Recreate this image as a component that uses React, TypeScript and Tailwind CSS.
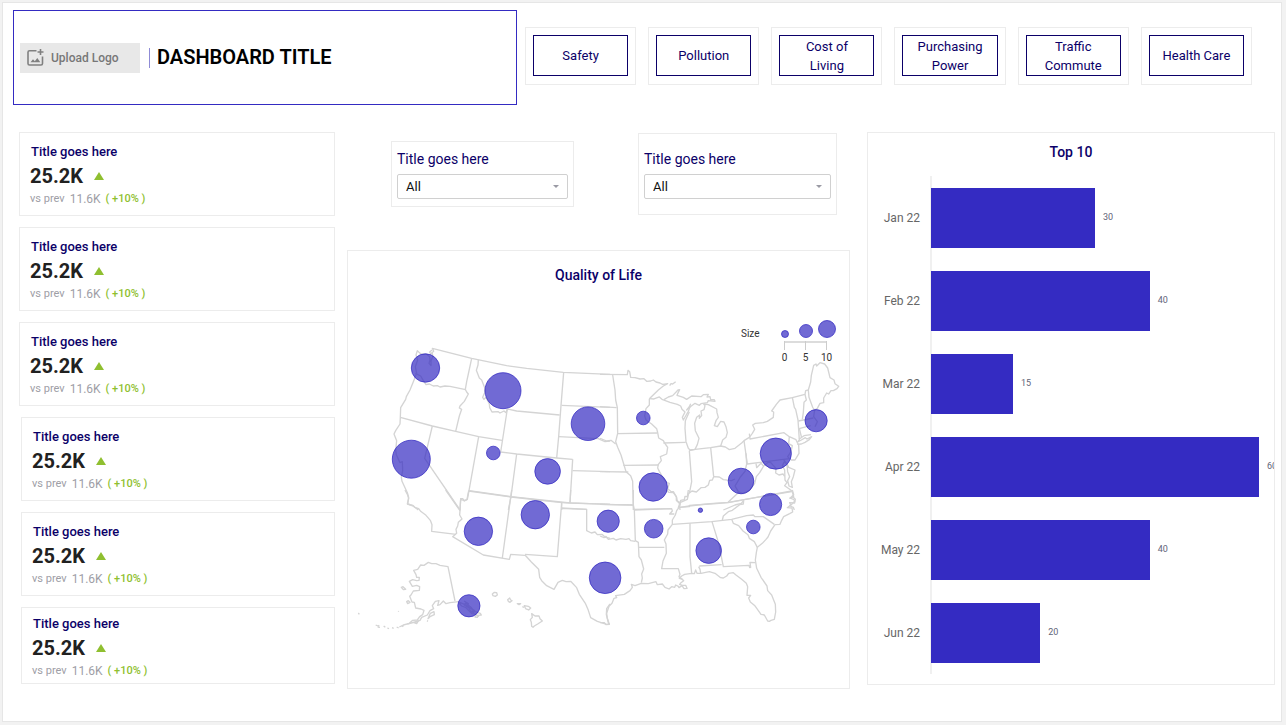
const categories = ['Safety', 'Pollution', 'Cost of Living', 'Purchasing Power', 'Traffic Commute', 'Health Care'];

const months = [
  { label: 'Jan 22', value: 30 },
  { label: 'Feb 22', value: 40 },
  { label: 'Mar 22', value: 15 },
  { label: 'Apr 22', value: 60 },
  { label: 'May 22', value: 40 },
  { label: 'Jun 22', value: 20 },
];
const AXIS_MAX = 62.75;

type Bubble = [x: number, y: number, r: number];

const bubbles: Bubble[] = [
  [425.5, 368, 14.2], [503, 390.7, 18], [411.3, 459.2, 19], [493.3, 453, 6.8],
  [588, 423.7, 16.8], [547.6, 471.4, 12.8], [643.3, 418, 6.8], [653.2, 487, 14.2],
  [741, 481, 12.8], [775.8, 453.6, 15.6], [816.1, 420.7, 11.1], [770.6, 504.5, 11.1],
  [700.4, 510.2, 2.2], [753.3, 527, 6.8], [708.7, 550.6, 12.8], [653.7, 528.7, 9.3],
  [608.2, 521.2, 11.1], [535.3, 514.7, 14.2], [478.4, 531.3, 14.2], [605.1, 577.8, 15.8],
  [468.9, 605.8, 11.1],
];

const northWest = [
  'M200 190L196 170 203 150 198 135 202 122 207 127 212 131 230 133 239 140 240 150 237 160 243 167 243 152 249 138 246 128 251 124 247 115 365 145 470 167 530 175 640 187 780 193',
  'M246 120L239 126 242 132 247 128',
  'M200 190L190 215 180 240 169 260 167 268 152 293 151 322 150 342 137 362 132 372 140 392 137 420 139 434 150 458 157 455 158 482 154 502 156 514 172 548 176 562 173 582 190 588 205 600',
  'M196 190L212 198 220 212 228 224 238 222 250 228 262 227 270 231 285 228 300 229 347 239',
  'M365 145L355 192 350 215 346 238 350 246 355 252 343 274 330 288 328 294 335 298 328 318 317 364',
  'M151 322L247 348 317 364 386 380 456 391',
  'M385 150L384 165 379 181 388 204 395 210 404 233 404 248 398 262 402 268 408 262 418 282 419 293 426 306 445 305 450 309 462 303 468 308 472 297',
  'M472 297L500 303 629 315',
  'M472 297L452 426 500 432 620 444 668 448',
  'M641 187L633 287 626 380 620 444',
  'M635 286L780 292',
  'M626 380L745 386 753 390 765 395 780 393',
  'M247 348L224 445 330 600',
  'M386 380L357 542 352 568 344 572 338 566 332 566 330 600',
  'M500 432L483 560 475 600',
  'M357 542L483 560 660 579 780 583',
  'M668 448L660 579',
  'M668 482L780 485',
  'M635 578V600M635 595L710 598',
];

const northEast = [
  'M0 193L82 194 84 181 89 185 92 202 105 203 120 207 132 206 140 214 152 213 160 210 168 216 180 219 188 223 203 221 190 228 175 240 148 266',
  'M209 227L213 221 218 222 227 215',
  'M148 266L148 285 138 296 134 318 138 330 155 342 170 356 173 368 176 384 190 392 196 402 203 412 200 432 181 440 184 452 175 463 173 474 178 484 190 505 200 518 208 520 203 536 212 544 220 545 230 562 232 574 238 580 240 600',
  'M148 266L162 267 178 261 186 268 194 271 210 277 232 283 242 288 246 298 255 306 247 322 250 330 257 318 265 304 270 290',
  'M192 269L205 261 218 257 234 240 239 239 233 251 231 256 250 262 260 268 275 258 303 260 310 254 325 253 321 261 330 260 332 269 343 269 345 274 325 272 322 278 303 281 298 286 285 280 270 291 260 300 268 290 272 281',
  'M268 305L256 332 255 355 258 395 265 415 270 420 285 418 292 404 297 385 286 362 284 340 290 322 299 315 298 325 305 317 303 303 312 299 315 287 311 282 325 284 350 297 351 308 355 322 348 332 343 347 352 350 362 334 372 336 378 350 382 368 378 382 368 390 362 408',
  'M268 422L285 418 332 413 362 408 376 411 388 419 405 415 425 399 432 392 448 382 457 370 464 358 458 345 466 340 490 338 502 334 520 322 521 306 515 303 529 283 540 270 577 263 615 253 617 242 625 240 632 216 634 196 641 166 648 162 650 168 660 158 674 162 683 174 690 203 702 210 705 221 716 229 711 236 700 242 693 242 686 252 680 249 671 264 671 278 660 280 652 295 644 300 641 320 652 335 645 350',
  'M625 240L627 262 638 292 645 302',
  'M615 253L619 270 612 277 610 307 607 328',
  'M577 262L583 292 587 298 594 330 598 390 592 397',
  'M595 333L640 324M597 356L632 347M598 355L605 384M597 388L612 377 633 374',
  'M592 403L604 402 615 397 628 389 635 380 621 387 616 383 604 390 594 395',
  'M432 392L442 462 550 448 570 446',
  'M448 371L450 387 552 368 568 380 566 401 577 407 573 425 563 440 570 448',
  'M568 380L588 389 591 396 596 405 597 430 585 450 573 450',
  'M468 460L470 473 483 460 491 468 508 454 517 463 528 475 527 489 537 495 549 492 554 499',
  'M550 448L560 460 566 472 585 480 580 500 574 515 577 532 567 528 563 512 569 500 563 485 561 464 553 455 547 467 554 480 555 510 561 518 554 527 569 538 576 543 581 559 570 564 582 569 584 574 570 588 580 592 583 600',
  'M491 468L479 488 469 500 464 520 448 542 430 551 414 549 384 577',
  'M438 430L440 462 435 484 421 501 413 515 405 528 415 545 429 551',
  'M332 413L341 500',
  'M405 507L394 512 370 509 358 501 341 500 337 510 329 511 325 525 315 532 303 533 289 546 276 543 266 550 262 568 240 578 239 588',
  'M268 422L275 515 268 550',
  'M38 195L45 240 47 270 52 293 53 370 47 395 53 412 63 435 72 465 78 485 92 497 98 514 100 600',
  'M0 290L50 293M53 371L172 369M0 385L20 393 33 391 47 402M70 466L175 465M190 399L257 397M0 485L85 486M0 583L100 585M103 598L215 596',
  'M235 593L268 588 330 581 385 577 470 562 575 543',
  'M431 571L424 580 405 585 370 600',
];

const southWest = [
  'M165 0L173 15 176 26 172 42 188 46 194 52 206 56 212 64 228 76 241 91 246 104 245 124 318 133',
  'M287 0L330 62 329 75 336 87 325 97 323 108 318 118 320 130 308 140 400 195 478 208 482 193 525 196',
  'M330 62L332 27 343 33 351 28 356 3 483 21 635 38 780 43',
  'M485 0L457 204M662 0L660 39M635 38L622 200 525 193',
  'M635 54L710 58 710 122 724 129 735 126 742 134 756 133 765 141 780 145',
  'M525 195L544 216 566 238 569 262 575 272 590 287 612 298 624 277 637 271 648 275 662 274 680 293 688 313 706 340 715 361 722 383 742 394 770 403 780 402',
  'M780 342L770 356 769 374 776 402',
  'M315 333L294 230 270 226 258 221 245 221 235 217 222 226 212 225 203 238 191 241 198 254 200 262 208 262 207 271 200 272 188 269 178 274 187 289 200 286 209 290 208 301 190 303 183 315 179 319 186 336 193 337 197 354 213 357 222 361 218 374 209 380 202 390 188 391 178 400 160 405 148 411',
  'M326 335L300 338 288 341 280 333 270 344 263 346 267 332 256 334 247 347 251 356 240 362 232 375 215 382 210 391 195 396 172 402',
  'M234 386L241 370 252 365 253 374 240 380ZM192 398L205 393 200 401ZM170 335L175 332 180 337 173 341Z',
  'M154 292L159 290 167 298 160 299ZM77 405L84 408 88 406M83 411L90 412M101 408L106 412M112 414L117 416M126 413L131 415M140 411L146 414M155 410L161 407M231 392L234 394M145 363L146 365M25 369L28 373',
  'M325 336L344 343 365 357 378 366 391 370 394 375 383 376 382 382 375 381 379 372 366 371 348 353 335 348 326 338',
  'M342 333L355 341 352 351 342 344 347 340 362 351 373 364 362 363 354 350M365 357L374 362 371 369 361 363M378 374L387 380',
  'M427 312L433 307 440 308 442 315 436 319 429 317ZM473 329L479 324 482 330 486 332 480 337 475 334ZM502 341L512 341 507 344ZM523 347L535 349 542 354 536 360 528 357 525 352ZM517 350L522 352',
  'M545 371L555 378 567 378 570 386 577 393 563 402 553 408 549 412 545 409 544 397 541 389 547 382Z',
];

const southEast = [
  'M0 43L100 45 103 60 106 152 115 157 117 200 124 210 131 237 125 252 127 264 124 278',
  'M100 0V45M0 138L12 143 18 139 25 148 40 145 48 150 62 146 78 148 87 146 92 152 106 154',
  'M103 60L215 56 217 63 209 72 223 72M117 172L193 172',
  'M200 0L206 7 220 8 229 20 229 31 240 38 237 52 230 62 226 75 217 90 217 103 204 120 203 132 193 150 198 162 199 190 189 213 185 236 235 236 240 253 237 260 246 268',
  'M265 0L262 20 255 19 253 29 242 31 240 42 235 52 268 50 268 46 330 42 385 38 470 22 575 5',
  'M217 103L335 95 395 88 440 77 460 75 465 80 490 80 523 103',
  'M431 32L430 42 419 44 397 61 385 65 370 78 367 90',
  'M395 88L400 100 416 107 429 123 444 134 448 145 463 155 472 172',
  'M336 95L358 166 362 190 370 230 447 226 449 233 452 232 450 217 466 218',
  'M270 100L270 200 275 250M298 228L365 224M296 230L300 238 302 250',
  'M0 398L13 398 18 404 28 403 22 385 20 370 27 349 36 340 42 325 50 323 47 317 73 313 90 302 97 292 94 283 105 287 124 280 145 281 168 275 172 284 187 282 195 292 207 297 215 290 224 292 227 285 235 289 237 293 246 287 252 296 261 295 257 286 247 286 239 283 243 278 251 272 246 267 238 265 245 258 254 253 275 250 283 251 287 240 291 250 303 250 328 245 345 250 362 263 370 264 380 258 386 250 400 248 408 255 425 268 439 280 443 290 441 316 452 316 446 324 451 336 462 345 466 349 483 373 493 375 503 393 508 394 513 391 523 388 527 366 526 343 515 315 503 302 501 288 483 262 470 235 466 210 469 188 472 172 487 160 498 148 504 141 512 123 525 104 540 103 545 91 551 80 569 71 578 66 576 54 562 53 572 45 569 38 584 39 586 28 579 21 570 25 581 14 577 0',
];

const regions = [
  { name: 'nw', transform: 'translate(350 310) scale(0.33333)', paths: northWest },
  { name: 'ne', transform: 'translate(600 310) scale(0.33333)', paths: northEast },
  { name: 'sw', transform: 'translate(350 490) scale(0.33333)', paths: southWest },
  { name: 'se', transform: 'translate(600 490) scale(0.33333)', paths: southEast },
];

function Kpi({ compact = false }: { compact?: boolean }) {
  return (
    <article
      className={
        compact
          ? 'border border-[#ececec] px-[10px] pt-[7px] pb-1'
          : 'border border-[#ececec] px-[10px] pt-[10px] pb-2'
      }
    >
      <h2 className="pl-px text-[13px] leading-[17px] font-medium text-[#0b0068]">Title goes here</h2>
      <div className="mt-[5px] flex items-center gap-[11px] text-[20px] leading-[22px] font-bold text-[#212121]">
        25.2K
        <svg viewBox="0 0 10 8" className="h-2 w-[10px] fill-[#8fbf30]" aria-hidden="true">
          <path d="M5 0L10 8H0Z" />
        </svg>
      </div>
      <p className="mt-1 flex gap-[5px] text-[11px] leading-4 text-[#9e9ea6]">
        <span>vs prev</span>
        <span className="text-[12px]">11.6K</span>
        <span className="font-medium text-[#8fbf30]">( +10% )</span>
      </p>
    </article>
  );
}

function Filter({ id, className }: { id: string; className: string }) {
  return (
    <div className={className}>
      <label htmlFor={id} className="block text-[14px] leading-[18px] text-[#0b0068]">
        Title goes here
      </label>
      <div className="relative mt-[6px]">
        <select
          id={id}
          className="block h-[25px] w-full appearance-none rounded-[2px] border border-[#d0d0d0] bg-white px-2 text-[13px] leading-[23px] text-[#111]"
        >
          <option>All</option>
        </select>
        <svg
          viewBox="0 0 6 3"
          className="pointer-events-none absolute top-[11px] right-[9px] h-[3px] w-[6px] fill-[#9a9aa4]"
          aria-hidden="true"
        >
          <path d="M0 0H6L3 3Z" />
        </svg>
      </div>
    </div>
  );
}

function BubbleMap() {
  const legend: Bubble[] = [
    [785, 334, 3.5],
    [806, 331, 6.5],
    [827, 329, 8.5],
  ];
  return (
    <svg viewBox="348 300 501 388" className="block w-full" role="img" aria-label="Quality of Life by state">
      <g fill="none" stroke="#d4d4d4" strokeWidth="4" strokeLinejoin="round">
        {regions.map((region) => (
          <g key={region.name} transform={region.transform}>
            {region.paths.map((d) => (
              <path key={d} d={d} />
            ))}
          </g>
        ))}
      </g>
      <g fill="#342bc2" fillOpacity="0.7" stroke="#342bc2" strokeOpacity="0.75" strokeWidth="1">
        {[...bubbles, ...legend].map(([x, y, r]) => (
          <circle key={`${x}-${y}`} cx={x} cy={y} r={r} />
        ))}
      </g>
      <path d="M785 342H826" stroke="#dcdcdc" strokeWidth="2" />
      <path d="M784.5 341V350M805.5 341V350M826.5 341V350" stroke="#cccccc" />
      <g fontSize="10" fill="#333333">
        <text x="741" y="337">Size</text>
        <g textAnchor="middle">
          <text x="784.5" y="361">0</text>
          <text x="805.5" y="361">5</text>
          <text x="826.5" y="361">10</text>
        </g>
      </g>
    </svg>
  );
}

export default function App() {
  return (
    <div className="flex min-h-screen bg-[#f2f2f2] pt-[2px] pr-1 pb-[3px] pl-[2px] font-[Roboto,sans-serif]">
      <main className="min-w-0 flex-1 border border-[#e6e6e6] bg-white pb-8">
        <header className="grid grid-cols-[504fr_727fr] items-start gap-2 pt-[7px] pr-[29px] pl-[10px]">
          <div className="flex items-center border border-[#342bc2] px-[6px] py-[31px]">
            <button
              type="button"
              className="flex h-[30px] w-[120px] items-center gap-[7px] bg-[#e8e8e8] pl-[7px] text-[12px] font-medium text-[#777]"
            >
              <svg viewBox="0 0 17 17" className="h-[17px] w-[17px]" fill="none" aria-hidden="true">
                <path d="M9.500 1.800H2.500Q1 1.800 1 3.300V14.500Q1 16 2.500 16H14Q15.500 16 15.500 14.500V7.500" stroke="#808080" strokeWidth="1.600" />
                <path d="M13.500 0V6M10.500 3H16.500" stroke="#808080" strokeWidth="1.600" />
                <path d="M3.500 13.300L6 10.300 7.800 12.200 10.300 9 13.300 13.300Z" fill="#808080" />
              </svg>
              Upload Logo
            </button>
            <span className="ml-[9px] h-5 w-px bg-[#8f8bd6]" />
            <h1 className="ml-[7px] text-[20px] leading-[31px] font-semibold text-black">DASHBOARD TITLE</h1>
          </div>
          <nav className="mt-[17px] grid grid-cols-6 gap-3" aria-label="Categories">
            {categories.map((name) => (
              <div key={name} className="border border-[#ececec] p-[7px]">
                <button
                  type="button"
                  className="h-[41px] w-full border border-[#0b0068] px-2 text-[13px] leading-[19px] text-[#0b0068]"
                >
                  {name}
                </button>
              </div>
            ))}
          </nav>
        </header>

        <div className="mt-[27px] grid grid-cols-[316fr_503fr_413fr] items-start gap-3 pr-[6px] pl-4">
          <section className="flex flex-col gap-[11px]" aria-label="Key figures">
            <div className="flex flex-col gap-[11px]">
              <Kpi />
              <Kpi />
              <Kpi />
            </div>
            <div className="flex flex-col gap-[11px] pl-[2px]">
              <Kpi />
              <Kpi />
              <Kpi compact />
            </div>
          </section>

          <section>
            <div className="flex items-center justify-end gap-16 pt-px pr-[13px]">
              <Filter id="filter-region" className="w-[183px] border border-[#ececec] px-[5px] pt-2 pb-[7px]" />
              <Filter id="filter-period" className="w-[199px] border border-[#ececec] px-[5px] pt-4 pb-[15px]" />
            </div>
            <div className="mt-[35px] border border-[#ececec]">
              <h2 className="pt-[14px] pb-[15px] text-center text-[14px] leading-5 font-medium text-[#0b0068]">
                Quality of Life
              </h2>
              <BubbleMap />
            </div>
          </section>

          <section className="ml-[5px] border border-[#ececec] pt-[9px] pb-[10px]">
            <h2 className="text-center text-[14px] leading-5 font-medium text-[#0b0068]">Top 10</h2>
            <ul className="mt-[14px] overflow-hidden">
              {months.map((month) => (
                <li key={month.label} className="flex h-[83px] items-stretch">
                  <span className="flex w-[62px] shrink-0 items-center justify-end pr-[10px] text-[12px] text-[#666]">
                    {month.label}
                  </span>
                  <div className="flex min-w-0 flex-1 items-center border-l border-[#f0f0f0] shadow-[inset_1px_0_0_#f0f0f0]">
                    <div
                      className="h-[60px] shrink-0 bg-[#342bc2]"
                      style={{ width: `${(month.value / AXIS_MAX) * 100}%` }}
                    />
                    <span className="ml-2 text-[9px] text-[#5f6478]">{month.value}</span>
                  </div>
                </li>
              ))}
            </ul>
          </section>
        </div>
      </main>
    </div>
  );
}
